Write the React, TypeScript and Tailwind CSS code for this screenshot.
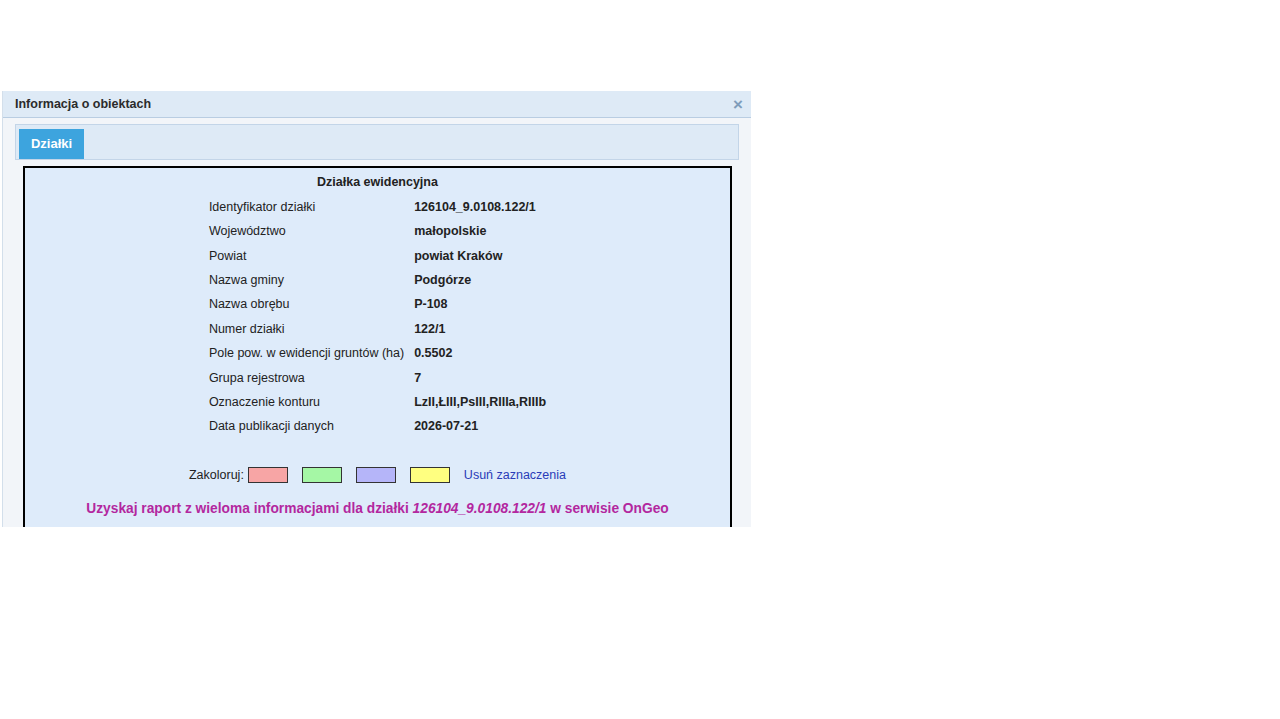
import React from 'react';

const ROWS: [string, string][] = [
    ['Identyfikator działki', '126104_9.0108.122/1'],
    ['Województwo', 'małopolskie'],
    ['Powiat', 'powiat Kraków'],
    ['Nazwa gminy', 'Podgórze'],
    ['Nazwa obrębu', 'P-108'],
    ['Numer działki', '122/1'],
    ['Pole pow. w ewidencji gruntów (ha)', '0.5502'],
    ['Grupa rejestrowa', '7'],
    ['Oznaczenie konturu', 'LzII,ŁIII,PsIII,RIIIa,RIIIb'],
    ['Data publikacji danych', '2026-07-21'],
];

const SWATCHES = ['bg-[#f7a5a5]', 'bg-[#a5f7a5]', 'bg-[#b5b5f9]', 'bg-[#ffff80]'];

export default function App() {
    return (
        <div className="min-h-screen bg-white pt-[91px] pl-[2px] font-['Liberation_Sans',Arial,sans-serif] text-[13px] text-[#222]">
            <div className="w-[749px] h-[436px] overflow-hidden bg-[#f2f5f9] border-l border-[#d3dfeb]">
                <div className="h-[27px] flex items-center justify-between pl-[12px] pr-[8px] bg-[#deeaf6] border-b border-[#b9cde2]">
                    <span className="font-bold text-[12.5px] text-[#2b2b2b]">Informacja o obiektach</span>
                    <span className="font-bold text-[17px] leading-none text-[#7f9dbb] mt-[1px]">×</span>
                </div>

                <div className="pt-[6px] pl-[12px] pr-[12px]">
                    <div className="h-[36px] bg-[#deeaf6] border border-[#c3d5e8] flex items-end pl-[3px]">
                        <div className="h-[30px] w-[65px] bg-[#3da4de] text-white font-bold flex items-center justify-center">Działki</div>
                    </div>

                    <div className="mt-[6px] ml-[8px] mr-[7px] h-[400px] bg-[#deebfa] border-2 border-black">
                        <div className="text-center font-bold text-[12.5px] pt-[5px] h-[27px]">Działka ewidencyjna</div>
                        <table className="mx-auto border-collapse">
                            <tbody>
                                {ROWS.map(([label, value]) => (
                                    <tr key={label} className="h-[24.4px]">
                                        <td className="pr-[10px] align-middle text-[12.5px]">{label}</td>
                                        <td className="font-bold align-middle text-[12.5px]">{value}</td>
                                    </tr>
                                ))}
                            </tbody>
                        </table>

                        <div className="mt-[27px] flex items-center justify-center gap-[14px]">
                            <div className="flex items-center gap-[4px]">
                                <span className="text-[12.5px]">Zakoloruj:</span>
                                <span className={`w-[40px] h-[16px] border border-[#333] ${SWATCHES[0]}`} />
                            </div>
                            {SWATCHES.slice(1).map(c => (
                                <span key={c} className={`w-[40px] h-[16px] border border-[#333] ${c}`} />
                            ))}
                            <span className="text-[#2a3cb8] text-[12.5px]">Usuń zaznaczenia</span>
                        </div>

                        <div className="mt-[14px] text-center font-bold text-[13.75px] text-[#b3279f]">
                            Uzyskaj raport z wieloma informacjami dla działki <i>126104_9.0108.122/1</i> w serwisie OnGeo
                        </div>
                    </div>
                </div>
            </div>
        </div>
    );
}
